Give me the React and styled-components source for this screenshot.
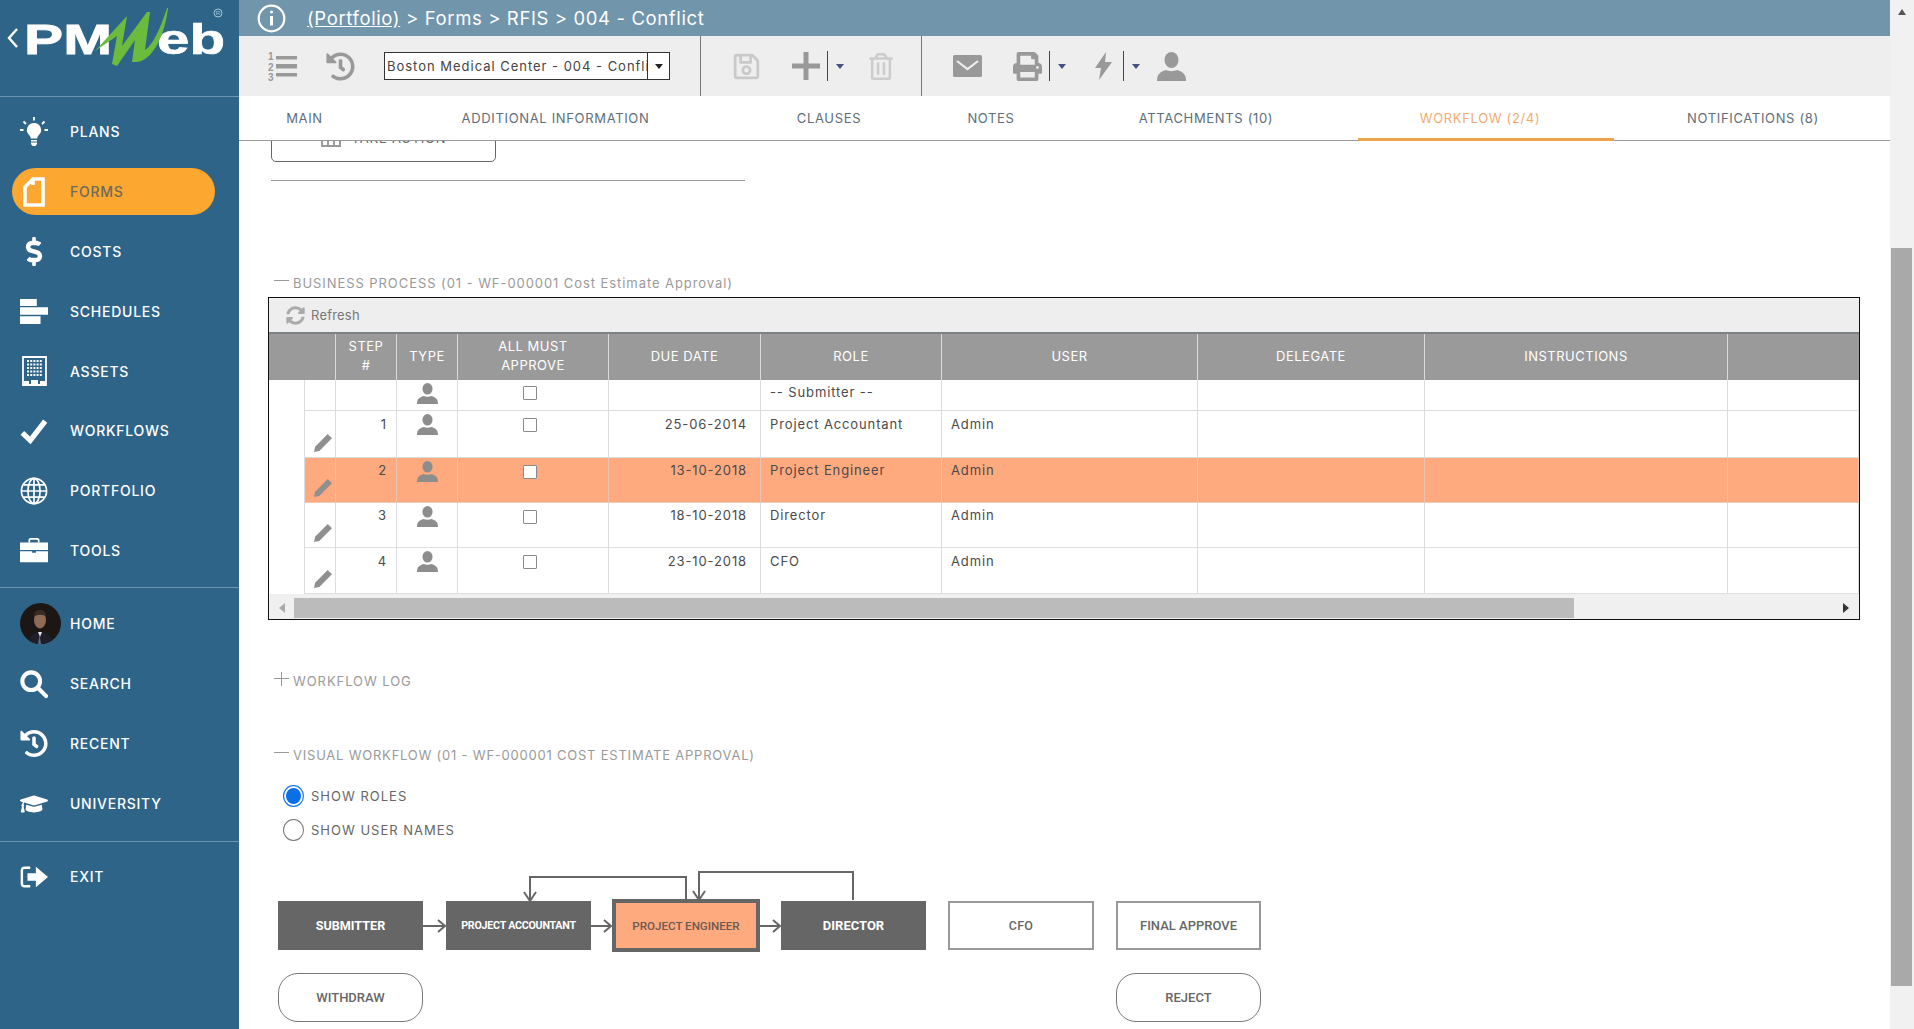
import React from "react";
import styled, { createGlobalStyle } from "styled-components";
import { FaHistory, FaDollarSign, FaGraduationCap, FaSyncAlt, FaPrint, FaRegSave, FaRegTrashAlt } from "react-icons/fa";

const Global = createGlobalStyle`
  html, body { margin: 0; padding: 0; height: 100%; overflow: hidden; background: #fff; }
  * { box-sizing: border-box; }
  body { font-family: Inter, "Open Sans", sans-serif; }
`;

const Page = styled.div`display: flex; width: 1914px; height: 1029px; overflow: hidden;`;
const Sidebar = styled.aside`width: 239px; flex: none; background: #2f6489; display: flex; flex-direction: column;`;
const LogoArea = styled.div`height: 97px; border-bottom: 1px solid #6d94ae; flex: none;`;
const LogoSvg = styled.svg`display: block;`;
const NavGroup = styled.nav`
  display: flex; flex-direction: column; flex: none;
  padding: ${p => p.$top}px 0 ${p => p.$bottom}px;
  border-bottom: ${p => (p.$line ? "1px solid #6d94ae" : "0")};
`;
const NavItem = styled.div`
  display: flex; align-items: center; height: 47px; margin: ${p => p.$my}px 24px ${p => p.$my}px 12px; padding-left: 8px; gap: 22px;
  border-radius: 24px; background: ${p => (p.$active ? "#fca72f" : "transparent")};
  color: ${p => (p.$active ? "#6f6a5e" : "#fff")};
  font-size: 14px; font-weight: 500; letter-spacing: .75px;
`;
const NavIcon = styled.span`width: 28px; height: 32px; flex: none; display: flex; align-items: center; justify-content: center; color: #fff;`;
const Avatar = styled.svg`width: 41px; height: 41px; margin-right: -13px; flex: none; border-radius: 50%;`;

const Main = styled.main`width: 1651px; flex: none; display: flex; flex-direction: column; height: 1029px;`;
const Header = styled.header`height: 36px; flex: none; background: #7195ab; display: flex; align-items: center; padding-left: 18px; color: #fff; font-size: 18.5px; letter-spacing: .62px;`;
const Crumb = styled.span`margin-left: 21px; white-space: pre;`;
const CrumbLink = styled.span`text-decoration: underline;`;
const Toolbar = styled.div`height: 60px; flex: none; background: #eee; display: flex;`;
const ToolGroup = styled.div`
  display: flex; align-items: center; height: 60px; flex: none; width: ${p => p.$w}px; padding-left: ${p => p.$pad}px;
  border-right: ${p => (p.$line ? "1px solid #777" : "0")};
`;
const ToolIcon = styled.span`
  display: flex; align-items: center; justify-content: center; flex: none;
  width: ${p => p.$w}px; height: 30px; margin-right: ${p => p.$gap || 0}px; color: ${p => p.$color || "#999"};
`;
const Combo = styled.div`width: 286px; height: 28px; border: 1px solid #333; background: #fff; display: flex; flex: none; overflow: hidden;`;
const ComboText = styled.div`width: 262px; flex: none; overflow: hidden; white-space: nowrap; padding-left: 2px; font-size: 13px; letter-spacing: .98px; line-height: 27px; color: #444;`;
const ComboBtn = styled.div`flex: 1; border-left: 1px solid #333; display: flex; align-items: center; justify-content: center;`;
const Tri = styled.span`
  width: 0; height: 0; border-left: ${p => p.$s || 4}px solid transparent; border-right: ${p => p.$s || 4}px solid transparent;
  border-top: ${p => (p.$s ? p.$s + 1 : 5)}px solid ${p => p.$color || "#45527f"};
`;
const Split = styled.span`
  display: flex; align-items: center; height: 30px; border-left: 1px solid #445; padding-left: 8px; width: ${p => p.$w}px; flex: none; margin-left: ${p => p.$ml || 7}px;
`;

const TabBar = styled.div`height: 45px; flex: none; display: flex; border-bottom: 1px solid #999; background: #fff;`;
const Tab = styled.div`
  position: relative; width: ${p => p.$w}px; flex: none; display: flex; align-items: center; justify-content: center; padding-left: ${p => p.$pl || 0}px;
  font-size: 13px; letter-spacing: .66px; color: ${p => (p.$active ? "#f0ab72" : "#5e6e7a")}; white-space: nowrap;
  &::after {
    content: ""; display: ${p => (p.$active ? "block" : "none")}; position: absolute; left: 11px; right: -1px; bottom: -1px; height: 3px; background: #eca34c;
  }
`;

const Content = styled.div`flex: 1; min-height: 0; overflow: hidden; padding-left: 29px; display: flex; flex-direction: column; align-items: flex-start; background: #fff;`;
const ActionBtn = styled.div`
  flex: none; margin: -21px 0 0 3px; width: 225px; height: 42px; border: 1px solid #666; border-radius: 0 0 5px 5px; display: flex; align-items: flex-end; justify-content: center;
  gap: 11px; font-size: 13px; color: #666; letter-spacing: .8px; padding-bottom: 16px; line-height: 14px;
`;
const ActionIcon = styled.svg`flex: none; margin-bottom: -2px;`;
const Rule = styled.div`flex: none; margin: 18px 0 0 3px; width: 474px; height: 1px; background: #999;`;
const SectionTitle = styled.div`
  flex: none; height: 18px; margin-top: ${p => p.$mt}px; margin-left: 6px; display: flex; align-items: center; gap: 4px;
  font-size: 13px; letter-spacing: ${p => p.$ls}px; color: #9a9a9a; white-space: nowrap;
`;
const Toggle = styled.span`position: relative; width: 15px; height: 14px; flex: none; margin-top: -5px;
  &::before { content: ""; position: absolute; left: 0; right: 0; top: 6px; height: 1.5px; background: #999; }
  &::after { content: ""; display: ${p => (p.$plus ? "block" : "none")}; position: absolute; top: 0; bottom: 0; left: 6.5px; width: 1.5px; background: #999; }
`;

const GridBox = styled.div`flex: none; width: 1592px; height: 323px; margin-top: 5px; border: 1px solid #111; display: flex; flex-direction: column; background: #fff;`;
const GridBar = styled.div`height: 34px; flex: none; background: #eee; display: flex; align-items: center; padding-left: 17px; gap: 6px; font-size: 13px; color: #777; letter-spacing: .2px;`;
const cols = "36px 31px 61px 61px 151px 152px 181px 256px 227px 303px 131px";
const HeadRow = styled.div`
  height: 48px; flex: none; display: grid; grid-template-columns: 67px 61px 61px 151px 152px 181px 256px 227px 303px 131px;
  background: #9a9a9a; border-top: 2px solid #7d8285; color: #fff; font-size: 13px; letter-spacing: .5px;
`;
const HeadCell = styled.div`
  display: flex; align-items: center; justify-content: center; text-align: center; line-height: 19px; padding-bottom: 2px;
  border-right: 1px solid ${p => (p.$plain ? "transparent" : "#d9d9d9")};
`;
const Row = styled.div`display: grid; grid-template-columns: ${cols}; height: ${p => p.$h}px; flex: none;`;
const Cell = styled.div`
  background: ${p => (p.$hot ? "#ffa97f" : "#fff")};
  border-right: 1px solid ${p => (p.$hot ? "#e8c4b0" : "#dcdcdc")};
  border-bottom: 1px solid ${p => (p.$hot ? "#f0c9b2" : "#dedede")};
  padding: ${p => p.$pt ?? 3}px 10px 0 9px; font-size: 13px; letter-spacing: .88px; line-height: 19px; color: #4a4a4a; white-space: nowrap;
  text-align: ${p => (p.$right ? "right" : "left")};
  padding-right: ${p => p.$pr ?? 10}px;
`;
const Gutter = styled.div`border-right: 1px solid #dcdcdc; background: #fff;`;
const PencilCell = styled(Cell)`padding: 0 0 4px 5px; display: flex; align-items: flex-end; justify-content: center;`;
const TypeCell = styled(Cell)`padding: 3px 0 0; display: flex; justify-content: center; align-items: flex-start;`;
const CheckCell = styled(Cell)`padding: ${p => p.$pt}px 6px 0 0; display: flex; justify-content: center; align-items: flex-start;`;
const Check = styled.input`
  appearance: none; margin: 0; width: 14px; height: 14px; border: 1.5px solid #8a8a8a; background: #fff; border-radius: 1px;
`;
const HScroll = styled.div`flex: 1; min-height: 0; background: #f0f0f0; display: flex; align-items: center; padding: 2px 0 0;`;
const ArrowBox = styled.div`width: ${p => p.$w}px; flex: none; display: flex; justify-content: center;`;
const HThumb = styled.div`width: 1280px; height: 20px; background: #bbb; flex: none;`;
const HSpace = styled.div`flex: 1;`;
const TriH = styled.span`
  width: 0; height: 0; border-top: 5px solid transparent; border-bottom: 5px solid transparent;
  ${p => (p.$left ? `border-right: 6px solid ${p.$c};` : `border-left: 6px solid ${p.$c};`)}
`;

const RadioRow = styled.label`
  flex: none; height: 24px; margin: ${p => p.$mt}px 0 0 15px; display: flex; align-items: center; gap: 7px;
  font-size: 13px; letter-spacing: 1px; color: #666;
`;
const Radio = styled.input`
  appearance: none; margin: 0; width: 21px; height: 22px; border-radius: 50%; background: #fff; flex: none;
  border: 1px solid ${p => (p.checked ? "#0b6fe8" : "#777")};
  box-shadow: ${p => (p.checked ? "inset 0 0 0 2px #fff, inset 0 0 0 11px #0b6fe8" : "none")};
`;

const Diagram = styled.div`position: relative; flex: none; margin-top: 17px; width: 1100px; height: 169px;`;
const Wires = styled.svg`position: absolute; left: 0; top: 0; overflow: visible;`;
const Node = styled.div`
  position: absolute; left: ${p => p.$x}px; top: ${p => p.$y}px; width: ${p => p.$w}px; height: ${p => p.$h}px;
  display: flex; align-items: center; justify-content: center; white-space: nowrap;
  font-family: Roboto, sans-serif; font-size: ${p => p.$fs}px; font-weight: ${p => p.$weight};
  letter-spacing: ${p => p.$ls}px;
  background: ${p => p.$bg}; color: ${p => p.$fg};
  border: ${p => p.$bw}px solid ${p => p.$bc}; border-radius: ${p => p.$r}px;
`;

const VScroll = styled.div`width: 24px; flex: none; background: #f1f1f1; display: flex; flex-direction: column; align-items: center; padding-top: 9px;`;
const VThumb = styled.div`width: 21px; height: 738px; background: #a9a9a9; margin-top: 233px; margin-left: -1px;`;
const TriUp = styled.span`width: 0; height: 0; border-left: 4.5px solid transparent; border-right: 4.5px solid transparent; border-bottom: 6px solid #555;`;

const Logo = () => (
  <LogoSvg width="239" height="96" viewBox="0 0 239 96">
    <path d="M17 29 L9 38 L17 47" fill="none" stroke="#fff" strokeWidth="2.4" />
    <text x="24" y="54" fontFamily="Liberation Sans" fontWeight="700" fontSize="42" fill="#fff" stroke="#fff" strokeWidth=".8" textLength="88" lengthAdjust="spacingAndGlyphs">PM</text>
    <text x="157" y="54" fontFamily="Liberation Sans" fontWeight="700" fontSize="42" fill="#fff" stroke="#fff" strokeWidth=".6" textLength="68" lengthAdjust="spacingAndGlyphs">eb</text>
    <path d="M95 51 L127 16 L122 46 L147 12 L150 12 L145 50 C152 46 160 30 167 8 L168 8 C165 35 152 62 136 62 L132 62 L135 40 L117 66 L112 64 L117 36 Z" fill="#6dbb3d" />
    <circle cx="218" cy="13" r="4" fill="none" stroke="#a9c3d3" strokeWidth="1" />
    <text x="215.800" y="15" fontFamily="Liberation Sans" fontSize="6" fill="#a9c3d3">R</text>
  </LogoSvg>
);

const Bulb = () => (
  <svg width="28" height="30" viewBox="0 0 28 30" fill="#fff">
    <path d="M14 6a7 7 0 0 1 4.5 12.4c-.9.8-1.2 2-1.3 3.1h-6.4c-.1-1.1-.4-2.3-1.3-3.1A7 7 0 0 1 14 6z" />
    <path d="M11 23h6v1.6h-6zM11 25.4h6V27l-1.5 2h-3L11 27z" />
    <path d="M14 0v3.5M3.5 4.5l2.5 2.5M24.5 4.5L22 7M0 13h3.5M24.5 13H28" stroke="#fff" strokeWidth="1.8" />
  </svg>
);
const FormDoc = () => (
  <svg width="22" height="30" viewBox="0 0 22 30"><path d="M10 2 H20 V28 H2 V10 Z M10 2 V8" fill="none" stroke="#fff" strokeWidth="3.6" /></svg>
);
const Bars = () => (
  <svg width="30" height="27" viewBox="0 0 30 27" fill="#fff"><path d="M0 0h18v7.5H0zM0 9h30v8H0zM0 18.5h22V27H0z" /></svg>
);
const Building = () => {
  const dots = [];
  for (let r = 0; r < 5; r++) for (let c = 0; c < 5; c++) dots.push(<rect key={r + "-" + c} x={5 + c * 3.2} y={4 + r * 3.5} width="2" height="2" />);
  return (
    <svg width="25" height="30" viewBox="0 0 25 30" fill="#fff">
      <path d="M1 1h23v28H1z" fill="none" stroke="#fff" strokeWidth="1.8" />
      {dots}
      <path d="M9 24h7v5H9zM2 25h5v4H2zM18 25h5v4h-5z" />
    </svg>
  );
};
const Tick = () => (
  <svg width="30" height="28" viewBox="0 0 30 28"><path d="M2.500 16 L11 24 L27 3.500" fill="none" stroke="#fff" strokeWidth="5.600" /></svg>
);
const Globe = () => (
  <svg width="30" height="30" viewBox="0 0 30 30" fill="none" stroke="#fff" strokeWidth="1.8">
    <circle cx="15" cy="15" r="13.5" /><ellipse cx="15" cy="15" rx="6.5" ry="13.5" /><path d="M15 1.5v27M1.5 15h27M3.500 8.500h23M3.500 21.500h23" />
  </svg>
);
const Case = () => (
  <svg width="30" height="26" viewBox="0 0 30 26" fill="#fff">
    <path d="M10 5V2.500C10 1.200 11 1 12 1h6c1 0 2 .2 2 1.500V5" fill="none" stroke="#fff" strokeWidth="1.8" />
    <path d="M0 5h30v8H0zM0 14.400h13V16h4v-1.600h13V26H0z" />
  </svg>
);
const Magnifier = () => (
  <svg width="30" height="30" viewBox="0 0 30 30" fill="none" stroke="#fff"><circle cx="12" cy="12" r="9.5" strokeWidth="4.4" /><path d="M19 19l9 9" strokeWidth="4.4" strokeLinecap="round" /></svg>
);
const Exit = () => (
  <svg width="30" height="26" viewBox="0 0 30 26">
    <path d="M11 3H5C3 3 2 4 2 6v14c0 2 1 3 3 3h6" fill="none" stroke="#fff" strokeWidth="2.6" />
    <path d="M8 9h9V2l13 11-13 11v-7H8z" fill="#fff" />
  </svg>
);
const Person = ({ size = 29, color = "#999" }) => (
  <svg width={size} height={size} viewBox="0 0 29 29" fill={color}>
    <ellipse cx="14.5" cy="8" rx="7" ry="8" />
    <path d="M0 29c0-7 3-9 9-11 3 1.500 8 1.500 11 0 6 2 9 4 9 11z" />
  </svg>
);
const Portrait = () => (
  <Avatar viewBox="0 0 41 41">
    <rect width="41" height="41" fill="#1c1715" />
    <path d="M8 41c1-9 6-11 12-12 6 1 12 3 13 12z" fill="#201f29" />
    <path d="M18 29l2 5 2-5z" fill="#dfe2ea" />
    <ellipse cx="20" cy="17" rx="6" ry="8.5" fill="#8f6a55" />
    <path d="M14 14c0-6 3-7 6-7s6 1 6 7c-2-3-9-3-12 0z" fill="#3a2c25" />
    <path d="M19.500 32l1.500 9h-3z" fill="#5f6a86" />
  </Avatar>
);
const ListNum = () => (
  <svg width="30" height="30" viewBox="0 0 30 30" fill="#999">
    <text x="1" y="9" fontSize="10" fontFamily="Liberation Sans" fontWeight="700">1</text>
    <text x="1" y="19.5" fontSize="10" fontFamily="Liberation Sans" fontWeight="700">2</text>
    <text x="1" y="30" fontSize="10" fontFamily="Liberation Sans" fontWeight="700">3</text>
    <path d="M9 5h21v3.600H9zM9 13h21v4.400H9zM9 22h21v3.600H9z" />
  </svg>
);
const Mail = () => (
  <svg width="29" height="22" viewBox="0 0 29 22">
    <rect width="29" height="22" rx="1.5" fill="#999" />
    <path d="M4 6l10.500 8L25 6" fill="none" stroke="#eee" strokeWidth="2.2" />
  </svg>
);
const Bolt = () => (
  <svg width="17" height="28" viewBox="0 0 17 28" fill="#999"><path d="M11 0L0 16h6L4 28l13-18h-7z" /></svg>
);
const PlusBig = () => (
  <svg width="28" height="28" viewBox="0 0 28 28" fill="#999"><path d="M11.500 0h5v11.500H28v5H16.500V28h-5V16.500H0v-5h11.500z" /></svg>
);
const Pencil = () => (
  <svg width="20" height="20" viewBox="0 0 19 19" fill="#8f8f8f"><path d="M14 1l4 4L6 17l-5 1 1-5z" /></svg>
);
const GridPerson = () => <Person size={21} color="#8d8d8d" />;

const navA = [
  ["PLANS", <Bulb />], ["FORMS", <FormDoc />, true], ["COSTS", <FaDollarSign size={29} />], ["SCHEDULES", <Bars />],
  ["ASSETS", <Building />], ["WORKFLOWS", <Tick />], ["PORTFOLIO", <Globe />], ["TOOLS", <Case />],
];
const navB = [
  ["HOME", <Portrait />], ["SEARCH", <Magnifier />], ["RECENT", <FaHistory size={29} />], ["UNIVERSITY", <FaGraduationCap size={30} />],
];
const tabs = [
  ["MAIN", 131], ["ADDITIONAL INFORMATION", 371], ["CLAUSES", 176], ["NOTES", 148], ["ATTACHMENTS (10)", 282], ["WORKFLOW (2/4)", 266, true], ["NOTIFICATIONS (8)", 277, false, 3],
];
const heads = [[""], ["STEP\n#"], ["TYPE"], ["ALL MUST\nAPPROVE"], ["DUE DATE"], ["ROLE"], ["USER"], ["DELEGATE"], ["INSTRUCTIONS"], ["", true]];
const rows = [
  { h: 31, pt: 3, step: "", date: "", role: "-- Submitter --", user: "" },
  { h: 47, pt: 4, step: "1", date: "25-06-2014", role: "Project Accountant", user: "Admin", edit: true },
  { h: 45, pt: 3, step: "2", date: "13-10-2018", role: "Project Engineer", user: "Admin", edit: true, hot: true },
  { h: 45, pt: 3, step: "3", date: "18-10-2018", role: "Director", user: "Admin", edit: true },
  { h: 46, pt: 4, step: "4", date: "23-10-2018", role: "CFO", user: "Admin", edit: true },
];
const dark = { $bg: "#666", $fg: "#fff", $bw: 0, $bc: "#666", $r: 0, $weight: 700 };
const light = { $bg: "#fff", $fg: "#666", $bw: 2, $bc: "#999", $r: 0, $weight: 500 };
const pill = { $bg: "#fff", $fg: "#666", $bw: 1.5, $bc: "#777", $r: 20, $weight: 500 };
const nodes = [
  ["SUBMITTER", 10, 42, 145, 49, 12.6, 0, dark],
  ["PROJECT ACCOUNTANT", 178, 42, 145, 49, 10.7, -.25, dark],
  ["PROJECT ENGINEER", 344, 40, 148, 53, 11.6, 0, { $bg: "#ffa97f", $fg: "#6d5a50", $bw: 4, $bc: "#666", $r: 0, $weight: 500 }],
  ["DIRECTOR", 513, 42, 145, 49, 13, 0, dark],
  ["CFO", 680, 42, 146, 49, 12.5, 0.2, light],
  ["FINAL APPROVE", 848, 42, 145, 49, 13, 0, light],
  ["WITHDRAW", 10, 114, 145, 49, 13, 0, pill],
  ["REJECT", 848, 114, 145, 49, 13, 0, pill],
];

export default function App() {
  return (
    <Page>
      <Global />
      <Sidebar>
        <LogoArea><Logo /></LogoArea>
        <NavGroup $top={5} $bottom={6.6} $line>
          {navA.map(([t, ic, a]) => (
            <NavItem key={t} $my={6.4} $active={a}><NavIcon>{ic}</NavIcon>{t}</NavItem>
          ))}
        </NavGroup>
        <NavGroup $top={6} $bottom={7} $line>
          {navB.map(([t, ic]) => (
            <NavItem key={t} $my={6.5}><NavIcon>{ic}</NavIcon>{t}</NavItem>
          ))}
        </NavGroup>
        <NavGroup $top={5} $bottom={0}>
          <NavItem $my={6.5}><NavIcon><Exit /></NavIcon>EXIT</NavItem>
        </NavGroup>
      </Sidebar>
      <Main>
        <Header>
          <svg width="29" height="29" viewBox="0 0 29 29" fill="none" stroke="#fff">
            <circle cx="14.5" cy="14.5" r="12.8" strokeWidth="2.2" />
            <path d="M14.500 12v9.500" strokeWidth="3" /><circle cx="14.5" cy="8" r="1.6" fill="#fff" stroke="none" />
          </svg>
          <Crumb><CrumbLink>(Portfolio)</CrumbLink> {"> Forms > RFIS > 004 - Conflict"}</Crumb>
        </Header>
        <Toolbar>
          <ToolGroup $w={462} $pad={28} $line>
            <ToolIcon $w={30} $gap={28}><ListNum /></ToolIcon>
            <ToolIcon $w={30} $gap={29}><FaHistory size={29} /></ToolIcon>
            <Combo>
              <ComboText>Boston Medical Center - 004 - Conflict</ComboText>
              <ComboBtn><Tri $s={4} $color="#222" /></ComboBtn>
            </Combo>
          </ToolGroup>
          <ToolGroup $w={221} $pad={31} $line>
            <ToolIcon $w={29} $gap={31} $color="#c9c9c9"><FaRegSave size={29} /></ToolIcon>
            <ToolIcon $w={28}><PlusBig /></ToolIcon>
            <Split $w={42}><Tri /></Split>
            <ToolIcon $w={24} $color="#ccc"><FaRegTrashAlt size={27} /></ToolIcon>
          </ToolGroup>
          <ToolGroup $w={300} $pad={31}>
            <ToolIcon $w={29} $gap={31}><Mail /></ToolIcon>
            <ToolIcon $w={29}><FaPrint size={29} /></ToolIcon>
            <Split $w={46}><Tri /></Split>
            <ToolIcon $w={17}><Bolt /></ToolIcon>
            <Split $w={34} $ml={11}><Tri /></Split>
            <ToolIcon $w={29}><Person /></ToolIcon>
          </ToolGroup>
        </Toolbar>
        <TabBar>
          {tabs.map(([t, w, a, pl]) => <Tab key={t} $w={w} $active={a} $pl={pl}>{t}</Tab>)}
        </TabBar>
        <Content>
          <ActionBtn>
            <ActionIcon width="20" height="20" viewBox="0 0 20 20" fill="none" stroke="#999" strokeWidth="2"><path d="M1 1h18v18H1zM7 1v18M13 1v18" /></ActionIcon>
            TAKE ACTION
          </ActionBtn>
          <Rule />
          <SectionTitle $mt={93} $ls={.93}><Toggle />BUSINESS PROCESS (01 - WF-000001 Cost Estimate Approval)</SectionTitle>
          <GridBox>
            <GridBar><FaSyncAlt size={19} color="#aaa" />Refresh</GridBar>
            <HeadRow>
              {heads.map(([t, plain], i) => (
                <HeadCell key={i} $plain={plain}>
                  <span>{t.split("\n").map((l, j) => <React.Fragment key={j}>{j > 0 && <br />}{l}</React.Fragment>)}</span>
                </HeadCell>
              ))}
            </HeadRow>
            {rows.map((r, i) => (
              <Row key={i} $h={r.h}>
                <Gutter />
                <PencilCell $hot={r.hot}>{r.edit && <Pencil />}</PencilCell>
                <Cell $hot={r.hot} $pt={r.pt} $right $pr={9}>{r.step}</Cell>
                <TypeCell $hot={r.hot}><GridPerson /></TypeCell>
                <CheckCell $hot={r.hot} $pt={i === 0 ? 6 : 7}><Check type="checkbox" readOnly /></CheckCell>
                <Cell $hot={r.hot} $pt={r.pt} $right $pr={13}>{r.date}</Cell>
                <Cell $hot={r.hot} $pt={r.pt}>{r.role}</Cell>
                <Cell $hot={r.hot} $pt={r.pt}>{r.user}</Cell>
                <Cell $hot={r.hot} />
                <Cell $hot={r.hot} />
                <Cell $hot={r.hot} />
              </Row>
            ))}
            <HScroll>
              <ArrowBox $w={25}><TriH $left $c="#aaa" /></ArrowBox>
              <HThumb />
              <HSpace />
              <ArrowBox $w={27}><TriH $c="#333" /></ArrowBox>
            </HScroll>
          </GridBox>
          <SectionTitle $mt={52} $ls={.93}><Toggle $plus />WORKFLOW LOG</SectionTitle>
          <SectionTitle $mt={56} $ls={.78}><Toggle />VISUAL WORKFLOW (01 - WF-000001 COST ESTIMATE APPROVAL)</SectionTitle>
          <RadioRow $mt={20}><Radio type="radio" name="wf" checked readOnly />SHOW ROLES</RadioRow>
          <RadioRow $mt={10}><Radio type="radio" name="wf" checked={false} readOnly />SHOW USER NAMES</RadioRow>
          <Diagram>
            {nodes.map(([t, x, y, w, h, fs, ls, st]) => (
              <Node key={t} $x={x} $y={y} $w={w} $h={h} $fs={fs} $ls={ls} {...st}>{t}</Node>
            ))}
            <Wires width="1100" height="120" viewBox="268 859 1100 120" fill="none" stroke="#666" strokeWidth="2">
              <path d="M423 926H445M438 920l7 6-7 6" />
              <path d="M591 926H611M604 920l7 6-7 6" />
              <path d="M760 926H780M773 920l7 6-7 6" />
              <path d="M686 900V877H530V901M524 892l6 9 6-9" />
              <path d="M853 900V872H699V900M693 891l6 9 6-9" />
            </Wires>
          </Diagram>
        </Content>
      </Main>
      <VScroll>
        <TriUp />
        <VThumb />
      </VScroll>
    </Page>
  );
}
